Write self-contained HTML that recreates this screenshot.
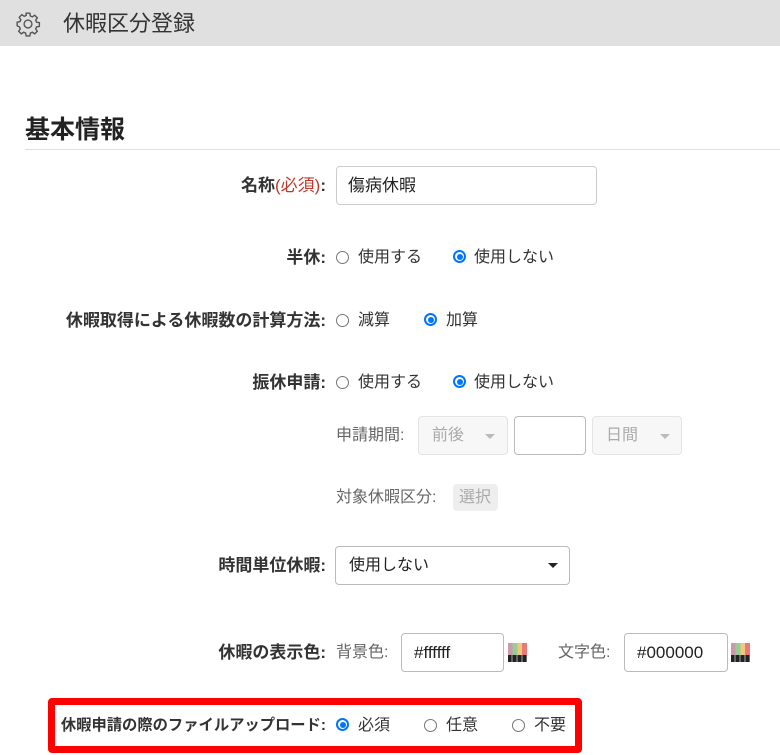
<!DOCTYPE html>
<html><head><meta charset="utf-8"><style>
*{box-sizing:border-box;margin:0;padding:0}
body{width:780px;height:755px;background:#fff;position:relative;overflow:hidden;font-family:"Liberation Sans","Noto Sans CJK JP",sans-serif;color:#333;font-size:16px}
.a{position:absolute;white-space:nowrap}
.lbl{position:absolute;right:454px;font-weight:bold;color:#333;line-height:20px;white-space:nowrap;font-size:17px}
.t{position:absolute;line-height:20px;white-space:nowrap}
.r{position:absolute;width:13px;height:13px;border:1px solid #767676;border-radius:50%;background:#fff}
.r.on{border:2px solid #0075ff}
.r.on::after{content:"";position:absolute;left:1.5px;top:1.5px;width:6px;height:6px;border-radius:50%;background:#0075ff}
.box{position:absolute;border:1px solid #ccc;border-radius:4px;background:#fff}
.dis{background:#f7f7f7;border-color:#e4e4e4;color:#aaa}
.car{position:absolute;width:0;height:0;border-left:5px solid transparent;border-right:5px solid transparent;border-top:5px solid #bbb}
.pal{position:absolute;width:19px;height:19px;background:linear-gradient(90deg,#c9a 0 25%,#9c9 25% 50%,#ec7 50% 75%,#e77 75%)}
.pal::after{content:"";position:absolute;left:0;right:0;bottom:0;height:7px;background:repeating-linear-gradient(90deg,#222 0 3px,#666 3px 5px)}
</style></head><body>
<div class="a" style="left:0;top:0;width:780px;height:46px;background:#e0e0e0"></div>
<svg class="a" style="left:15px;top:11px" width="26" height="26" viewBox="0 0 24 24" fill="none" stroke="#555" stroke-width="1.3"><path d="M10.3 2h3.4l.5 2.6 1.8.8 2.2-1.5 2.4 2.4-1.5 2.2.8 1.8 2.6.5v3.4l-2.6.5-.8 1.8 1.5 2.2-2.4 2.4-2.2-1.5-1.8.8-.5 2.6h-3.4l-.5-2.6-1.8-.8-2.2 1.5-2.4-2.4 1.5-2.2-.8-1.8L2 13.7v-3.4l2.6-.5.8-1.8-1.5-2.2 2.4-2.4 2.2 1.5 1.8-.8z"/><circle cx="12" cy="12" r="3.6"/></svg>
<div class="a" style="left:63px;top:10px;font-size:22px;color:#333;line-height:28px">休暇区分登録</div>
<div class="a" style="left:25px;top:114px;font-size:25px;font-weight:bold;color:#222;line-height:32px">基本情報</div>
<div class="a" style="left:25px;top:149px;width:755px;height:1px;background:#ddd"></div>

<div class="lbl" style="top:176px">名称<span style="color:#c0392b;font-weight:normal">(必須)</span>:</div>
<div class="box" style="left:336px;top:166px;width:261px;height:39px"></div>
<div class="t" style="left:348px;top:176px;color:#222;font-size:17px">傷病休暇</div>

<div class="lbl" style="top:248px">半休:</div>
<div class="r" style="left:336px;top:251px"></div><div class="t" style="left:358px;top:248px">使用する</div>
<div class="r on" style="left:453px;top:250px"></div><div class="t" style="left:474px;top:248px">使用しない</div>

<div class="lbl" style="top:311px">休暇取得による休暇数の計算方法:</div>
<div class="r" style="left:336px;top:314px"></div><div class="t" style="left:358px;top:311px">減算</div>
<div class="r on" style="left:424px;top:313px"></div><div class="t" style="left:446px;top:311px">加算</div>

<div class="lbl" style="top:373px">振休申請:</div>
<div class="r" style="left:336px;top:376px"></div><div class="t" style="left:358px;top:373px">使用する</div>
<div class="r on" style="left:453px;top:375px"></div><div class="t" style="left:474px;top:373px">使用しない</div>

<div class="t" style="left:336px;top:426px;color:#666">申請期間:</div>
<div class="box dis" style="left:418px;top:416px;width:90px;height:39px"></div>
<div class="t" style="left:432px;top:426px;color:#aaa">前後</div><div class="car" style="left:485px;top:434px"></div>
<div class="box" style="left:514px;top:416px;width:72px;height:39px;border-color:#bbb"></div>
<div class="box dis" style="left:592px;top:416px;width:90px;height:39px"></div>
<div class="t" style="left:606px;top:426px;color:#aaa">日間</div><div class="car" style="left:660px;top:434px"></div>

<div class="t" style="left:336px;top:488px;color:#666">対象休暇区分:</div>
<div class="box" style="left:453px;top:484px;width:45px;height:27px;background:#eee;border:none"></div>
<div class="t" style="left:459px;top:488px;color:#aaa">選択</div>

<div class="lbl" style="top:556px">時間単位休暇:</div>
<div class="box" style="left:335px;top:546px;width:235px;height:39px;border-color:#bbb"></div>
<div class="t" style="left:349px;top:556px;color:#222">使用しない</div>
<div class="car" style="left:548px;top:563px;border-top-color:#222"></div>

<div class="lbl" style="top:643px">休暇の表示色:</div>
<div class="t" style="left:336px;top:643px;color:#666">背景色:</div>
<div class="box" style="left:401px;top:633px;width:103px;height:39px;border-color:#bbb"></div>
<div class="t" style="left:414px;top:643px;color:#222;font-size:17px">#ffffff</div>
<div class="pal" style="left:508px;top:643px"></div>
<div class="t" style="left:558px;top:643px;color:#666">文字色:</div>
<div class="box" style="left:624px;top:633px;width:104px;height:39px;border-color:#bbb"></div>
<div class="t" style="left:637px;top:643px;color:#222;font-size:17px">#000000</div>
<div class="pal" style="left:731px;top:643px"></div>

<div class="a" style="left:48px;top:698px;width:534px;height:55px;border:7px solid #f00;border-radius:4px"></div>
<div class="lbl" style="top:716px;font-size:15.3px">休暇申請の際のファイルアップロード:</div>
<div class="r on" style="left:336px;top:718px"></div><div class="t" style="left:358px;top:716px">必須</div>
<div class="r" style="left:424px;top:719px"></div><div class="t" style="left:446px;top:716px">任意</div>
<div class="r" style="left:512px;top:719px"></div><div class="t" style="left:534px;top:716px">不要</div>
</body></html>
